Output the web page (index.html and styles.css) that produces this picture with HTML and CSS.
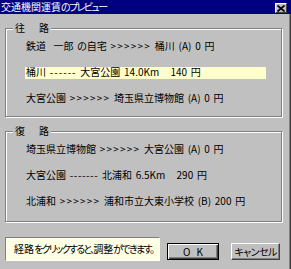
FILE: index.html
```html
<!DOCTYPE html>
<html lang="ja">
<head>
<meta charset="utf-8">
<title>交通機関運賃のプレビュー</title>
<link rel="stylesheet" href="styles.css">
</head>
<body>
<div class="window">
  <div class="titlebar">
    <span class="title">交通機関運賃<span class="kana">のプレビュー</span></span>
    <span class="close"><svg width="8" height="7" viewBox="0 0 8 7"><path d="M0.5 0.5L7.5 6.5M7.5 0.5L0.5 6.5" stroke="#000" stroke-width="1.7" fill="none"/></svg></span>
  </div>
  <div class="body">
    <section class="group g1">
      <div class="legend">往　路</div>
      <ul class="rows">
        <li class="row">鉄道  一郎 の自宅 <span class="arr">&gt;&gt;&gt;&gt;&gt;&gt;</span> 桶川 (A) 0 円</li>
        <li class="row sel">桶川 <span class="dash">------</span> 大宮公園 14.0Km   140 円</li>
        <li class="row">大宮公園 <span class="arr">&gt;&gt;&gt;&gt;&gt;&gt;</span> 埼玉県立博物館 (A) 0 円</li>
      </ul>
    </section>
    <section class="group g2">
      <div class="legend">復　路</div>
      <ul class="rows">
        <li class="row">埼玉県立博物館 <span class="arr">&gt;&gt;&gt;&gt;&gt;&gt;</span> 大宮公園 (A) 0 円</li>
        <li class="row">大宮公園 <span class="dash d7">-------</span> 北浦和 6.5Km   290 円</li>
        <li class="row">北浦和 <span class="arr">&gt;&gt;&gt;&gt;&gt;&gt;</span> 浦和市立大東小学校 (B) 200 円</li>
      </ul>
    </section>
    <div class="bottom">
      <div class="msg">経路<span class="kana2">をクリックすると、</span>調整<span class="kana2">ができます。</span></div>
      <div class="btn ok">O K</div>
      <div class="btn cancel">キャンセル</div>
    </div>
  </div>
</div>
</body>
</html>
```
FILE: styles.css
```css
* { box-sizing: border-box; margin: 0; padding: 0; }
html, body { width: 291px; height: 269px; overflow: hidden; }
body {
  background: #c0c0c0;
  font-family: "Noto Sans CJK JP", "Noto Sans", sans-serif;
  font-size: 10px;
  font-feature-settings: "palt";
  color: #000;
}
.window { width: 291px; height: 269px; display: flex; flex-direction: column; }
.titlebar {
  height: 14px; flex: none;
  background: #000080;
  display: flex; justify-content: space-between; align-items: flex-start;
}
.title { color: #fff; line-height: 14px; padding-left: 1px; white-space: nowrap; }
.kana { letter-spacing: -1.6px; }
.close {
  width: 12px; height: 10px; margin: 3px 4px 0 0;
  background: #c0c0c0;
  border: 1px solid; border-color: #fff #404040 #404040 #fff;
  display: flex; align-items: center; justify-content: center;
}
.close svg { display: block; }
.body {
  flex: 1;
  padding: 14px 0 0 5px;
  border-right: 1px solid #404040;
  box-shadow: inset -1px 0 0 #808080;
  display: flex; flex-direction: column;
}
.group {
  width: 277px;
  border: 1px solid #808080;
  box-shadow: inset 1px 1px 0 #fff, 1px 1px 0 #fff;
}
.g1 { height: 89px; }
.g2 { height: 91px; margin-top: 14px; }
.legend {
  width: fit-content;
  margin: -6px 0 0 7px;
  padding: 0 0 0 2px;
  height: 10px; line-height: 10px;
  background: #c0c0c0;
  letter-spacing: 2px;
}
.rows {
  list-style: none;
  padding: 8px 0 0 19px;
  display: flex; flex-direction: column; gap: 14px;
}
.row {
  width: 241px; height: 12px;
  line-height: 10px;
  padding: 0 0 2px 1px;
  white-space: pre;
  word-spacing: 1.5px;
}
.row.sel { background: #ffffcc; }
.arr { letter-spacing: 1.2px; }
.dash { letter-spacing: 1px; }
.dash.d7 { letter-spacing: 0.6px; }
.bottom { display: flex; align-items: flex-start; margin-top: 15px; }
.msg {
  width: 155px; height: 24px;
  background: #ffffe6;
  border: 1px solid; border-color: #808080 #fff #fff #808080;
  padding-left: 8px;
  line-height: 22px;
  white-space: nowrap;
  overflow: hidden;
}
.kana2 { letter-spacing: -1.7px; }
.btn {
  height: 17px; margin-top: 6px;
  background: #c0c0c0;
  display: flex; align-items: center; justify-content: center;
  line-height: 15px; white-space: pre;
}
.ok {
  width: 52px; margin-left: 7px;
  border: 1px solid #000;
  box-shadow: inset 1px 1px 0 #fff, inset -1px -1px 0 #404040, inset -2px -2px 0 #808080;
  word-spacing: 4px;
}
.cancel {
  width: 49px; margin-left: 12px;
  border: 1px solid; border-color: #fff #404040 #404040 #fff;
  box-shadow: inset -1px -1px 0 #808080;
  letter-spacing: -0.6px;
}
```
